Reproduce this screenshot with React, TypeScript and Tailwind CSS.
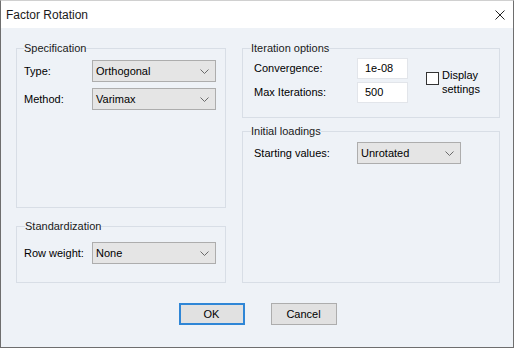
import React from "react";

function Chevron() {
  return (
    <svg width="9" height="5" viewBox="0 0 9 5" className="shrink-0">
      <path d="M0.5 0.5 L4.5 4.5 L8.5 0.5" fill="none" stroke="#6a6a6a" strokeWidth="1" />
    </svg>
  );
}

function Combo({ value, w }: { value: string; w: string }) {
  return (
    <div
      className={`flex items-center justify-between h-[22px] ${w} bg-[#e5e5e5] border border-[#adadad] pl-[3px] pr-[6px]`}
    >
      <span>{value}</span>
      <Chevron />
    </div>
  );
}

function Group({
  title,
  className,
  legendClass,
  children,
}: {
  title: string;
  className: string;
  legendClass: string;
  children: React.ReactNode;
}) {
  return (
    <fieldset className={`border border-[#d8dee6] ${className}`}>
      <legend className={`leading-[13px] text-[#1a1a1a] ${legendClass}`}>{title}</legend>
      {children}
    </fieldset>
  );
}

export default function App() {
  return (
    <div className="w-[515px] h-[349px] bg-white font-['Liberation_Sans',Arial,sans-serif] text-[11px] text-black">
      <div className="w-[514px] h-[348px] flex flex-col border-l border-r border-b border-t border-l-[#6e6e6e] border-r-[#6e6e6e] border-b-[#6e6e6e] border-t-[#d0d0d0] bg-[#eef2f7]">
        {/* Title bar */}
        <div className="h-[27px] bg-white flex items-center justify-between pl-[5px] pr-[8px] shrink-0">
          <span className="text-[12px] text-[#1a1a1a]">Factor Rotation</span>
          <svg width="10" height="10" viewBox="0 0 10 10">
            <path d="M0.5 0.5 L9.5 9.5 M9.5 0.5 L0.5 9.5" stroke="#222" strokeWidth="1" />
          </svg>
        </div>

        {/* Body */}
        <div className="flex pl-[15px] pt-[14px] gap-[16px]">
          {/* Left column */}
          <div className="w-[210px] flex flex-col gap-[12px]">
            <Group title="Specification" className="h-[166px] pl-[7px]" legendClass="ml-0">
              <div className="flex flex-col gap-[6px] pt-[5px]">
                <div className="flex items-center">
                  <span className="w-[68px]">Type:</span>
                  <Combo value="Orthogonal" w="w-[124px]" />
                </div>
                <div className="flex items-center">
                  <span className="w-[68px]">Method:</span>
                  <Combo value="Varimax" w="w-[124px]" />
                </div>
              </div>
            </Group>
            <Group title="Standardization" className="h-[63px] pl-[7px]" legendClass="ml-[1px]">
              <div className="flex items-center pt-[9px]">
                <span className="w-[68px]">Row weight:</span>
                <Combo value="None" w="w-[124px]" />
              </div>
            </Group>
          </div>

          {/* Right column */}
          <div className="w-[258px] flex flex-col gap-[7px]">
            <Group title="Iteration options" className="h-[76px] pl-[11px]" legendClass="-ml-[3px]">
              <div className="flex pt-[3px]">
                <div className="flex flex-col gap-[3px]">
                  <div className="flex items-center">
                    <span className="w-[103px]">Convergence:</span>
                    <div className="w-[51px] h-[21px] bg-white border border-[#e2e5ea] flex items-center pl-[7px]">
                      1e-08
                    </div>
                  </div>
                  <div className="flex items-center">
                    <span className="w-[103px]">Max Iterations:</span>
                    <div className="w-[51px] h-[21px] bg-white border border-[#e2e5ea] flex items-center pl-[7px]">
                      500
                    </div>
                  </div>
                </div>
                <div className="flex items-start ml-[18px] pt-[10px]">
                  <div className="w-[13px] h-[13px] mt-[4px] bg-white border border-[#333333] shrink-0" />
                  <span className="ml-[3px] leading-[14px]">
                    Display
                    <br />
                    settings
                  </span>
                </div>
              </div>
            </Group>
            <Group title="Initial loadings" className="h-[158px] pl-[11px]" legendClass="-ml-[3px]">
              <div className="flex items-center pt-[4px]">
                <span className="w-[103px]">Starting values:</span>
                <Combo value="Unrotated" w="w-[104px]" />
              </div>
            </Group>
          </div>
        </div>

        {/* Buttons */}
        <div className="flex justify-center gap-[26px] pt-[20px] pl-[1px]">
          <button className="w-[66px] h-[22px] bg-[#e1e1e1] border-2 border-[#2f86d6] flex items-center justify-center">
            OK
          </button>
          <button className="w-[66px] h-[22px] bg-[#e1e1e1] border border-[#adadad] flex items-center justify-center">
            Cancel
          </button>
        </div>
      </div>
    </div>
  );
}
